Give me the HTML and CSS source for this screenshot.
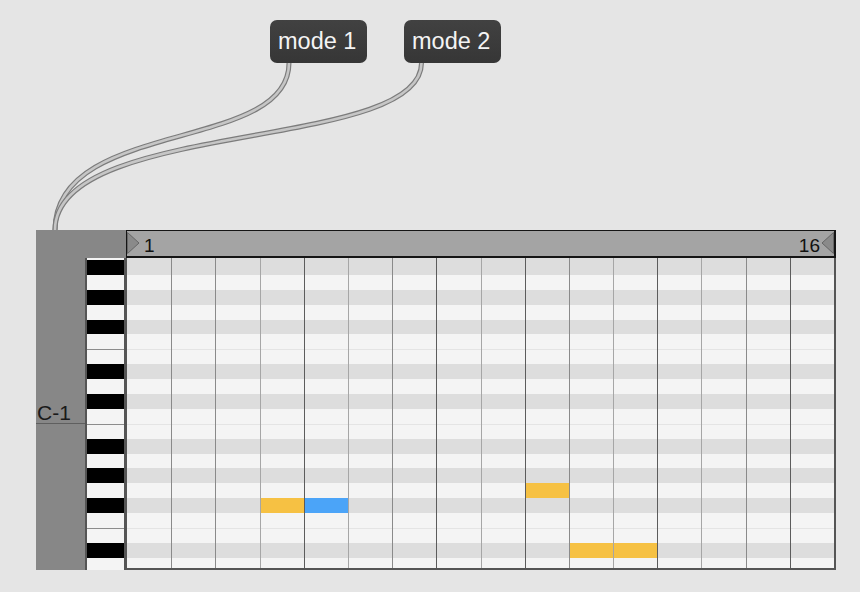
FILE: index.html
```html
<!DOCTYPE html>
<html>
<head>
<meta charset="utf-8">
<link rel="stylesheet" href="styles.css">
</head>
<body>
<div class="page">
  <div class="buttons">
    <div class="msg">mode 1</div>
    <div class="msg">mode 2</div>
  </div>
  <div class="roll">
    <div class="side"><div class="oct">C-1</div></div>
    <div class="main">
      <div class="head">
        <div class="corner"></div>
        <div class="ruler">
          <svg class="tri" width="13" height="22" viewBox="0 0 13 22"><polygon points="0.5,0.5 12,11 0.5,21.5"/></svg>
          <span class="num start">1</span>
          <span class="num end">16</span>
          <svg class="tri" width="13" height="22" viewBox="0 0 13 22"><polygon points="12.5,0.5 1,11 12.5,21.5"/></svg>
        </div>
      </div>
      <div class="body">
        <div class="keys">
          <div class="key b"></div><div class="key"></div><div class="key b"></div><div class="key"></div>
          <div class="key b"></div><div class="key"></div><div class="key sep"></div><div class="key b"></div>
          <div class="key"></div><div class="key b"></div><div class="key"></div><div class="key sep"></div>
          <div class="key b"></div><div class="key"></div><div class="key b"></div><div class="key"></div>
          <div class="key b"></div><div class="key"></div><div class="key sep"></div><div class="key b"></div>
          <div class="key"></div>
        </div>
        <div class="grid">
          <div class="rows">
            <div class="row b"></div><div class="row"></div><div class="row b"></div><div class="row"></div>
            <div class="row b"></div><div class="row"></div><div class="row sep"></div><div class="row b"></div>
            <div class="row"></div><div class="row b"></div><div class="row"></div><div class="row sep"></div>
            <div class="row b"></div><div class="row"></div><div class="row b"></div><div class="row"></div>
            <div class="row b"></div><div class="row"></div><div class="row sep"></div><div class="row b"></div>
            <div class="row"></div>
          </div>
          <div class="notes">
            <div class="note" style="grid-row:17; grid-column:4"></div>
            <div class="note sel" style="grid-row:17; grid-column:5"></div>
            <div class="note" style="grid-row:16; grid-column:10"></div>
            <div class="note" style="grid-row:20; grid-column:11 / span 2"></div>
          </div>
          <div class="lines">
            <div class="col"></div>
            <div class="col mid"></div><div class="col mid"></div><div class="col light"></div><div class="col dark"></div>
            <div class="col light"></div><div class="col mid"></div><div class="col dark"></div><div class="col light"></div>
            <div class="col dark"></div><div class="col mid"></div><div class="col light"></div><div class="col dark"></div>
            <div class="col light"></div><div class="col mid"></div><div class="col dark"></div>
          </div>
        </div>
      </div>
    </div>
  </div>
  <svg class="cables" width="860" height="592" viewBox="0 0 860 592">
    <g class="cable">
      <path class="outer" d="M289,63 C289,153 55,118 55,230"/>
      <path class="inner" d="M289,63 C289,153 55,118 55,230"/>
    </g>
    <g class="cable">
      <path class="outer" d="M421.5,63 C421.5,152 55,119 55,230"/>
      <path class="inner" d="M421.5,63 C421.5,152 55,119 55,230"/>
    </g>
  </svg>
</div>
</body>
</html>
```
FILE: styles.css
```css
html, body {
  margin: 0;
  padding: 0;
  background: #e5e5e5;
}

body {
  font-family: "Liberation Sans", Arial, sans-serif;
}

.page {
  position: relative;
  width: 860px;
  height: 592px;
  overflow: hidden;
}

.buttons {
  display: flex;
  gap: 37px;
  padding: 20px 0 0 270px;
}

.msg {
  width: 97px;
  height: 43px;
  box-sizing: border-box;
  padding-left: 8px;
  background: linear-gradient(#414141, #363636);
  border-radius: 7px;
  color: #f4f4f4;
  font-size: 23.5px;
  line-height: 43px;
  white-space: nowrap;
}

.roll {
  display: flex;
  width: 800px;
  height: 340px;
  margin: 167px 0 0 36px;
}

.side {
  width: 49px;
  flex: none;
  box-sizing: border-box;
  padding-top: 172px;
  background: #878787;
}

.oct {
  height: 21px;
  line-height: 21px;
  font-size: 21px;
  color: #1a1a1a;
  padding-left: 1px;
  border-bottom: 1px solid #5f5f5f;
}

.main {
  width: 751px;
  display: flex;
  flex-direction: column;
}

.head {
  display: flex;
  height: 28px;
}

.corner {
  width: 41px;
  background: #878787;
}

.ruler {
  width: 710px;
  box-sizing: border-box;
  border: 1px solid #151515;
  border-right-width: 2px;
  border-bottom-width: 2px;
  background: #a4a4a4;
  display: flex;
  align-items: flex-end;
  padding-bottom: 1px;
}

.tri {
  align-self: center;
  flex: none;
}

.tri polygon {
  fill: #8a8a8a;
  stroke: #666;
  stroke-width: 1;
}

.num {
  font-size: 19px;
  line-height: 18px;
  color: #111;
}

.start {
  margin-left: 4px;
  flex: 1;
}

.end {
  margin-right: 1px;
}

.body {
  display: flex;
  height: 312px;
}

.keys {
  width: 39px;
  flex: none;
  box-sizing: border-box;
  border-left: 2px solid #555;
  background: #f4f4f4;
  padding-top: 2px;
  overflow: hidden;
}

.key {
  height: 14.9px;
  box-sizing: border-box;
}

.key.b {
  background: #000;
}

.key.sep {
  border-top: 1px solid #8c8c8c;
}

.grid {
  width: 712px;
  flex: none;
  box-sizing: border-box;
  border-left: 3px solid #555;
  border-right: 2px solid #555;
  border-bottom: 2px solid #555;
  position: relative;
}

.rows {
  display: grid;
  height: 100%;
  grid-template-rows: 16.9px repeat(19, 14.9px) 1fr;
}

.row {
  background: #f4f4f4;
  box-sizing: border-box;
}

.row.b {
  background: #dddddd;
}

.row.sep {
  border-top: 1px solid #e4e4e4;
}

.notes {
  position: absolute;
  inset: 0;
  display: grid;
  grid-template-columns: repeat(16, 1fr);
  grid-template-rows: 16.9px repeat(19, 14.9px) 1fr;
}

.note {
  background: #f6c143;
}

.note.sel {
  background: #4ba4f8;
}

.lines {
  position: absolute;
  inset: 0;
  display: grid;
  grid-template-columns: repeat(16, 1fr);
}

.col.mid {
  border-left: 1px solid #8a8a8a;
}

.col.light {
  border-left: 1px solid #a6a6a6;
}

.col.dark {
  border-left: 1px solid #5c5c5c;
}

.cables {
  position: absolute;
  left: 0;
  top: 0;
  pointer-events: none;
}

.cable path {
  fill: none;
}

.cable .outer {
  stroke: #7c7c7c;
  stroke-width: 5;
}

.cable .inner {
  stroke: #c6c6c6;
  stroke-width: 2.6;
}
```
